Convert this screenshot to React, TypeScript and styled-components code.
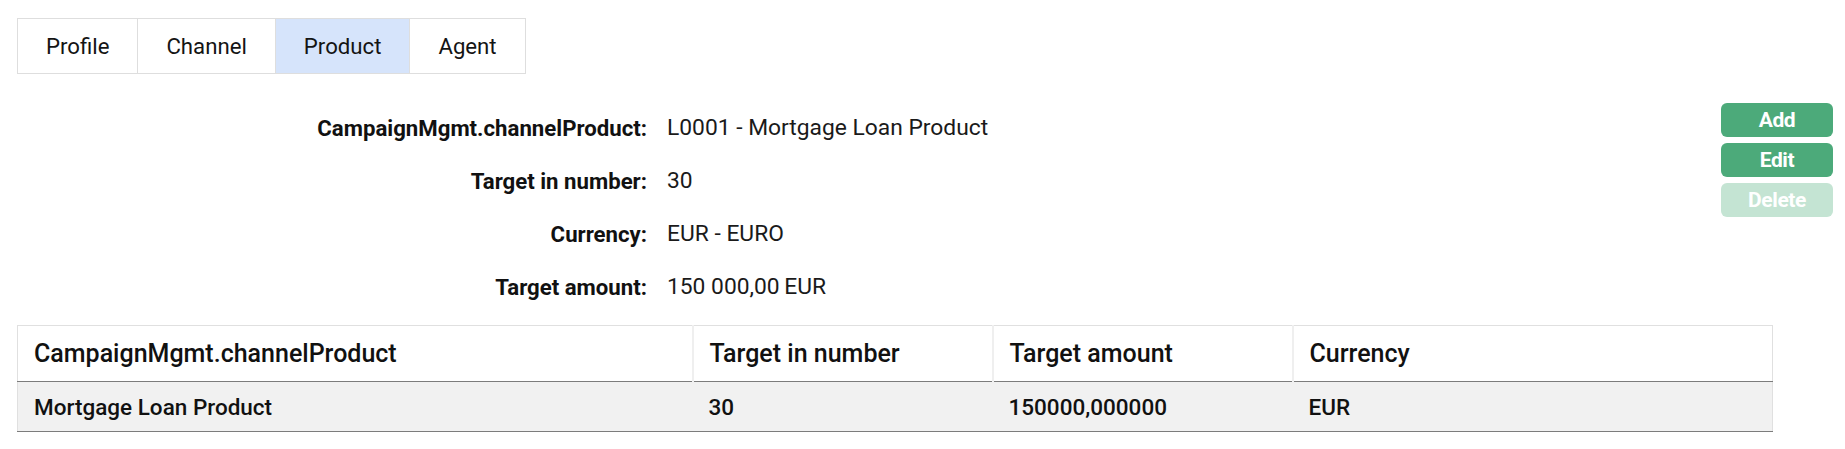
import React from "react";
import styled, { createGlobalStyle } from "styled-components";

const GlobalStyle = createGlobalStyle`
  html, body {
    margin: 0;
    padding: 0;
    background: #ffffff;
  }
  body {
    font-family: Roboto, "Noto Sans", Arial, sans-serif;
    color: #111111;
  }
  * { box-sizing: border-box; }
`;

const Page = styled.div`
  padding: 18px 12px 0 17px;
`;

const TabBar = styled.div`
  display: inline-flex;
  border: 1px solid #dedede;
`;

const Tab = styled.div<{ $active?: boolean }>`
  display: flex;
  align-items: center;
  height: 54px;
  padding: 0 28px;
  font-size: 22.2px;
  color: #141414;
  background: ${(p) => (p.$active ? "#d6e4fb" : "#ffffff")};
  & + & {
    border-left: 1px solid #dedede;
  }
`;

const DetailSection = styled.div`
  display: flex;
  align-items: flex-start;
  margin-top: 27px;
`;

const FieldGrid = styled.div`
  display: grid;
  grid-template-columns: 630px auto;
  grid-auto-rows: 53px;
  column-gap: 20px;
  align-items: center;
`;

const FieldLabel = styled.div`
  text-align: right;
  font-size: 22.2px;
  font-weight: 700;
  color: #111111;
`;

const FieldValue = styled.div`
  font-size: 22.8px;
  color: #1a1a1a;
`;

const ButtonColumn = styled.div`
  margin-left: auto;
  padding-top: 2px;
  display: flex;
  flex-direction: column;
  gap: 6px;
`;

const ActionButton = styled.button<{ $disabled?: boolean }>`
  width: 112px;
  height: 34px;
  border: none;
  border-radius: 6px;
  background: ${(p) => (p.$disabled ? "#c4e4d3" : "#4caa7a")};
  color: #ffffff;
  font-family: Roboto, Arial, sans-serif;
  font-size: 21px;
  font-weight: 700;
  letter-spacing: -0.4px;
  padding: 0;
  cursor: ${(p) => (p.$disabled ? "default" : "pointer")};
`;

const Table = styled.table`
  width: 1755px;
  margin-top: 12px;
  border-collapse: collapse;
  table-layout: fixed;
  border: 1px solid #e0e0e0;
`;

const HeadCell = styled.th`
  height: 56px;
  padding: 0 16px;
  text-align: left;
  font-size: 25px;
  font-weight: 500;
  color: #111111;
  background: #ffffff;
  border-bottom: 1px solid #7c7c7c;
  & + & {
    border-left: 2px solid #efefef;
  }
`;

const BodyCell = styled.td`
  height: 50px;
  padding: 0 16px;
  font-size: 22.5px;
  font-weight: 500;
  color: #111111;
  background: #f1f1f1;
  border-bottom: 1px solid #7c7c7c;
`;

const tabs = ["Profile", "Channel", "Product", "Agent"];

const fields: [string, string][] = [
  ["CampaignMgmt.channelProduct:", "L0001 - Mortgage Loan Product"],
  ["Target in number:", "30"],
  ["Currency:", "EUR - EURO"],
  ["Target amount:", "150 000,00\u2009EUR"],
];

const columns = [
  { title: "CampaignMgmt.channelProduct", width: 675 },
  { title: "Target in number", width: 300 },
  { title: "Target amount", width: 300 },
  { title: "Currency", width: 480 },
];

const rows = [["Mortgage Loan Product", "30", "150000,000000", "EUR"]];

export default function App() {
  return (
    <>
      <GlobalStyle />
      <Page>
        <TabBar>
          {tabs.map((t) => (
            <Tab key={t} $active={t === "Product"}>
              {t}
            </Tab>
          ))}
        </TabBar>
        <DetailSection>
          <FieldGrid>
            {fields.map(([label, value]) => (
              <React.Fragment key={label}>
                <FieldLabel>{label}</FieldLabel>
                <FieldValue>{value}</FieldValue>
              </React.Fragment>
            ))}
          </FieldGrid>
          <ButtonColumn>
            <ActionButton>Add</ActionButton>
            <ActionButton>Edit</ActionButton>
            <ActionButton $disabled>Delete</ActionButton>
          </ButtonColumn>
        </DetailSection>
        <Table>
          <colgroup>
            {columns.map((c) => (
              <col key={c.title} style={{ width: c.width }} />
            ))}
          </colgroup>
          <thead>
            <tr>
              {columns.map((c) => (
                <HeadCell key={c.title}>{c.title}</HeadCell>
              ))}
            </tr>
          </thead>
          <tbody>
            {rows.map((r, i) => (
              <tr key={i}>
                {r.map((cell, j) => (
                  <BodyCell key={j}>{cell}</BodyCell>
                ))}
              </tr>
            ))}
          </tbody>
        </Table>
      </Page>
    </>
  );
}
